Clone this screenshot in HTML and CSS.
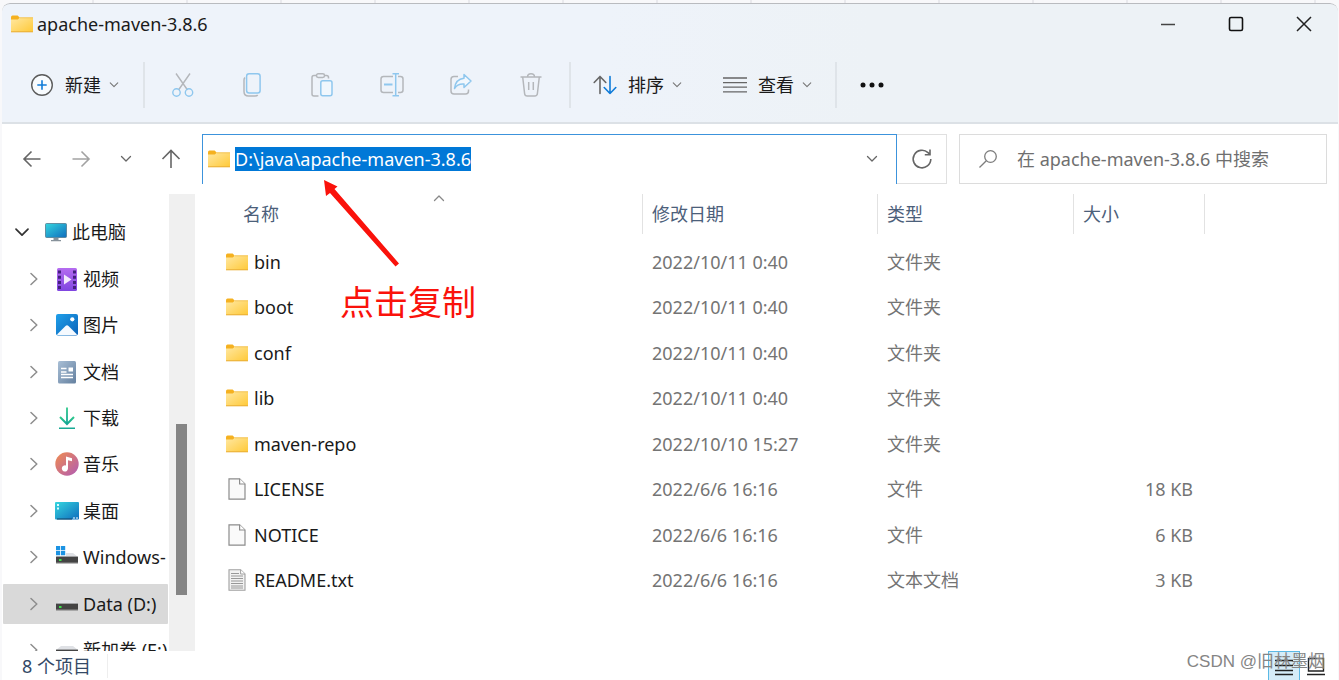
FILE: index.html
```html
<!DOCTYPE html>
<html lang="zh-CN">
<head>
<meta charset="utf-8">
<title>apache-maven-3.8.6</title>
<link rel="stylesheet" href="styles.css">
</head>
<body>
<svg class="defs" aria-hidden="true">
  <defs>
    <linearGradient id="g-folder" x1="0" y1="0" x2="1" y2="1"><stop offset="0" stop-color="#ffe8a3"/><stop offset="1" stop-color="#ffc937"/></linearGradient>
    <linearGradient id="g-screen" x1="0" y1="0" x2="1" y2="1"><stop offset="0" stop-color="#35d6df"/><stop offset="1" stop-color="#0f6cbd"/></linearGradient>
    <linearGradient id="g-video" x1="0" y1="0" x2="0" y2="1"><stop offset="0" stop-color="#b56cf0"/><stop offset="1" stop-color="#7f45e0"/></linearGradient>
    <linearGradient id="g-picture" x1="0" y1="0" x2="1" y2="1"><stop offset="0" stop-color="#1fa0ea"/><stop offset="1" stop-color="#0b62b8"/></linearGradient>
    <linearGradient id="g-doc" x1="0" y1="0" x2="1" y2="1"><stop offset="0" stop-color="#a9bfd6"/><stop offset="1" stop-color="#64809f"/></linearGradient>
    <linearGradient id="g-down" x1="0" y1="0" x2="0" y2="1"><stop offset="0" stop-color="#2fc98b"/><stop offset="1" stop-color="#12a595"/></linearGradient>
    <linearGradient id="g-music" x1="0" y1="0" x2="1" y2="1"><stop offset="0" stop-color="#f08c4f"/><stop offset="1" stop-color="#b05bb5"/></linearGradient>
  </defs>
  <symbol id="folder" viewBox="0 0 22 18">
    <path d="M0 2.2Q0 .5 1.5 .5H6.6L8.6 2.6V6H0Z" fill="#f5b120"/>
    <path d="M0 4.6H6.8L9 2.6H22V16.6Q22 17 21.5 17H.5Q0 17 0 16.6Z" fill="url(#g-folder)"/>
    <path d="M8.8 2.8H22" stroke="#f0bd48" stroke-width=".8"/>
    <path d="M0 16.8H22" stroke="#e9ad35" stroke-width="1"/>
  </symbol>
  <symbol id="file" viewBox="0 0 18 22">
    <path d="M1 .8H11.6L17 6V21.2H1Z" fill="#fafafa" stroke="#8c8c8c" stroke-width="1.2"/>
    <path d="M11.6 .8V6H17" fill="#fff" stroke="#8c8c8c" stroke-width="1.2"/>
  </symbol>
  <symbol id="textfile" viewBox="0 0 18 22">
    <path d="M1 .8H12.6L17 5V21.2H1Z" fill="#f2f2f2" stroke="#a0a0a0" stroke-width="1.1"/>
    <path d="M12.6 .8V5H17" fill="#fff" stroke="#a0a0a0"/>
    <path d="M3 4.5H11M3 7H15M3 9.5H15M3 12H15M3 14.500H15M3 17H15M3 19H15" stroke="#989898" stroke-width="1"/>
  </symbol>
  <symbol id="down" viewBox="0 0 12 8"><path d="M1.500 1.500L6 6L10.500 1.500" fill="none" stroke="currentColor" stroke-width="1.300" stroke-linecap="round" stroke-linejoin="round"/></symbol>
  <symbol id="right" viewBox="0 0 8 14"><path d="M1 1.500L6.800 7L1 12.500" fill="none" stroke="currentColor" stroke-width="1.500" stroke-linecap="round" stroke-linejoin="round"/></symbol>
  <symbol id="drive" viewBox="0 0 22 22">
    <path d="M5 8H17L22 12H0Z" fill="#dfe1e5"/>
    <path d="M0 11.600H22V18H0Z" fill="#444"/><path d="M0 17.200H22V18.500H0Z" fill="#777"/>
    <path d="M3 14H5.500V16H3Z" fill="#3be04a"/>
  </symbol>
</svg>

<div class="window">
  <header class="top">
    <div class="titlebar">
      <svg class="i-folder"><use href="#folder"/></svg>
      <h1 class="title">apache-maven-3.8.6</h1>
      <div class="controls">
        <button type="button" aria-label="最小化"><svg width="16" height="16"><path d="M1 8.500H15" stroke="#444" stroke-width="1.300"/></svg></button>
        <button type="button" aria-label="最大化"><svg width="16" height="16"><rect x="1.500" y="1.500" width="13" height="13" rx="1.500" fill="none" stroke="#111" stroke-width="1.600"/></svg></button>
        <button type="button" aria-label="关闭"><svg width="16" height="16"><path d="M1 1L15 15M15 1L1 15" stroke="#222" stroke-width="1.500"/></svg></button>
      </div>
    </div>
    <div class="toolbar">
      <button type="button" class="tool tool-new">
        <svg width="24" height="24"><circle cx="12" cy="12" r="10.300" fill="#f8fbfe" stroke="#5c5c5c" stroke-width="1.400"/><path d="M7.300 12H16.700M12 7.300V16.700" stroke="#0f7bd8" stroke-width="1.600"/></svg>
        <span>新建</span><svg class="chev small"><use href="#down"/></svg>
      </button>
      <div class="rule"></div>
      <div class="actions">
        <button type="button" aria-label="剪切"><svg width="24" height="26" fill="none" stroke-width="1.400"><path d="M5 1.500L16.500 18M19 1.500L7.500 18" stroke="#b4b7bb"/><circle cx="5.500" cy="20.500" r="3.700" stroke="#8fc7ee"/><circle cx="18" cy="20.500" r="3.700" stroke="#8fc7ee"/></svg></button>
        <button type="button" aria-label="复制"><svg width="22" height="26" fill="none" stroke-width="1.500"><path d="M4 5.500Q3 6.500 3 8V19.500Q3 24 7.500 24H14Q16 24 16.700 23" stroke="#b4b7bb"/><rect x="5.600" y="1.700" width="13.500" height="19.300" rx="2.500" stroke="#8fc7ee"/></svg></button>
        <button type="button" aria-label="粘贴"><svg width="24" height="26" fill="none" stroke-width="1.500"><path d="M6 3.500H4Q2 3.500 2 5.500V22Q2 24 4 24H8.500M14.500 3.500H16.500Q18.500 3.500 18.500 5.500V6.500" stroke="#b4b7bb"/><rect x="6.500" y="1.800" width="8" height="3.600" rx="1.700" stroke="#b4b7bb"/><rect x="10.800" y="8.800" width="11.200" height="15" rx="2" fill="#f1f7fd" stroke="#8fc7ee"/></svg></button>
        <button type="button" aria-label="重命名"><svg width="26" height="26" fill="none" stroke-width="1.500"><path d="M14 4.500H4.500Q2 4.500 2 7V18Q2 20.500 4.500 20.500H14M19 4.500H21.500Q24 4.500 24 7V18Q24 20.500 21.500 20.500H19" stroke="#b4b7bb"/><path d="M13.500 1.700H20M13.500 23.700H20M16.700 1.700V23.700" stroke="#8fc7ee"/><path d="M5 12.500H13.500" stroke="#8fc7ee" stroke-width="2.200"/></svg></button>
        <button type="button" aria-label="共享"><svg width="24" height="26" fill="none" stroke-width="1.500" stroke-linejoin="round"><path d="M9 4.500H5Q2 4.500 2 7.500V19Q2 22 5 22H16.500Q19.500 22 19.500 19V17.500" stroke="#b4b7bb"/><path d="M15 2.500L22 9L15 15.500V12Q8.500 11.500 5.500 16.500Q6.500 7 15 6.200Z" fill="#f1f7fd" stroke="#8fc7ee"/></svg></button>
        <button type="button" aria-label="删除"><svg width="24" height="26" fill="none" stroke="#b4b7bb" stroke-width="1.500"><path d="M1.500 5H22.500M8.500 5Q8.500 1.800 12 1.800T15.500 5M3.700 5L5.600 21.500Q5.900 24 8.200 24H15.800Q18.100 24 18.400 21.500L20.300 5M9.700 10V18M14.300 10V18"/></svg></button>
      </div>
      <div class="rule"></div>
      <button type="button" class="tool tool-sort">
        <svg width="24" height="20" fill="none" stroke-width="1.600" stroke-linecap="round" stroke-linejoin="round"><path d="M1.200 7.500L7 1.500L12.800 7.500M7 1.500V18.500" stroke="#666"/><path d="M11.200 12.500L17 18.500L22.800 12.500M17 18.500V1.500" stroke="#0f7bd8"/></svg>
        <span>排序</span><svg class="chev small"><use href="#down"/></svg>
      </button>
      <button type="button" class="tool tool-view">
        <svg width="24" height="18"><path d="M0 2H24M0 6.600H24M0 11.200H24M0 15.800H24" stroke="#666" stroke-width="1.300"/></svg>
        <span>查看</span><svg class="chev small"><use href="#down"/></svg>
      </button>
      <div class="rule"></div>
      <button type="button" class="more" aria-label="更多"><svg width="24" height="8" fill="#111"><circle cx="3" cy="4" r="2.500"/><circle cx="12" cy="4" r="2.500"/><circle cx="21" cy="4" r="2.500"/></svg></button>
    </div>
  </header>

  <div class="navbar">
    <nav class="arrows" aria-label="导航">
      <button type="button" aria-label="后退"><svg width="20" height="20" class="stroke"><path d="M9.500 2.500L2 10L9.500 17.500M2 10H18.500"/></svg></button>
      <button type="button" aria-label="前进" class="pale"><svg width="20" height="20" class="stroke"><path d="M10.500 2.500L18 10L10.500 17.500M18 10H1.500"/></svg></button>
      <button type="button" aria-label="最近位置"><svg class="chev"><use href="#down"/></svg></button>
      <button type="button" aria-label="上移"><svg width="20" height="20" class="stroke"><path d="M1.500 10L10 1.500L18.500 10M10 1.500V19"/></svg></button>
    </nav>
    <div class="address">
      <svg class="i-folder"><use href="#folder"/></svg>
      <input class="path" type="text" aria-label="地址" value="D:\java\apache-maven-3.8.6">
      <button type="button" class="drop" aria-label="历史"><svg class="chev"><use href="#down"/></svg></button>
    </div>
    <button type="button" class="refresh" aria-label="刷新"><svg width="22" height="22" class="stroke"><path d="M19.800 11A8.800 8.800 0 1 1 17 4.600L19 6.500M19 1.500V6.700H13.800"/></svg></button>
    <label class="search">
      <svg width="20" height="20" class="stroke thin"><circle cx="12.500" cy="7.500" r="5.800"/><path d="M8.300 11.700L1.500 18.500"/></svg>
      <input type="text" aria-label="搜索" placeholder="在 apache-maven-3.8.6 中搜索">
    </label>
  </div>

  <main class="body">
    <aside class="side">
      <ul class="tree">
        <li class="root"><svg class="open"><use href="#down"/></svg><svg width="22" height="22"><rect x=".500" y="2.500" width="21" height="14" rx="1" fill="url(#g-screen)" stroke="#527b91" stroke-width=".800"/><path d="M8.500 17H13.500V19H16V20.300H6V19H8.500Z" fill="#87929b"/></svg><span>此电脑</span></li>
        <li><svg class="closed"><use href="#right"/></svg><svg width="24" height="24"><rect x="2" y="1" width="20" height="23" rx="1.500" fill="url(#g-video)"/><path d="M4.500 3.500V23M19.500 3.500V23" stroke="#43207d" stroke-width="3" stroke-dasharray="3 2.200"/><path d="M9 7.500L16.500 12.500L9 17.500Z" fill="#f3e9fc"/></svg><span>视频</span></li>
        <li><svg class="closed"><use href="#right"/></svg><svg width="24" height="24"><rect x="1" y="1" width="22" height="21.500" rx="2" fill="url(#g-picture)"/><path d="M2 21.500L10.500 13Q12 11.700 13.500 13L22 21.500Q21.500 22 20 22H4Q2.500 22 2 21.500Z" fill="#f5faff"/><circle cx="17.300" cy="6.300" r="2.100" fill="#fff"/></svg><span>图片</span></li>
        <li><svg class="closed"><use href="#right"/></svg><svg width="24" height="24"><rect x="3" y="1" width="18" height="22.500" rx="1.500" fill="url(#g-doc)"/><path d="M6 8.500H11.500M6 12H11.500M6 14.500H18M6 17.500H18" stroke="#fff" stroke-width="1.300"/><path d="M13.500 7.500H18V11.500H13.500Z" fill="#fff"/></svg><span>文档</span></li>
        <li><svg class="closed"><use href="#right"/></svg><svg width="24" height="24" fill="none" stroke="url(#g-down)" stroke-width="2"><path d="M5 11L12 18L19 11"/><path d="M11.100 1.500H12.900V17H11.100Z" fill="url(#g-down)" stroke="none"/><path d="M4 21.500H20V23H4Z" fill="#16a994" stroke="none"/></svg><span>下载</span></li>
        <li><svg class="closed"><use href="#right"/></svg><svg width="24" height="24"><circle cx="12" cy="12" r="11.700" fill="url(#g-music)"/><path d="M11 4.500L17 6.200V9.300L13 8.200V16.300A3.100 3.100 0 1 1 11 13.500Z" fill="#fff"/></svg><span>音乐</span></li>
        <li><svg class="closed"><use href="#right"/></svg><svg width="24" height="24"><rect x="0" y="3" width="24" height="17.500" rx="1" fill="url(#g-screen)"/><path d="M2 5H4V7H2ZM2 8.500H4V10.500H2Z" fill="#d9fbff"/><path d="M2 20H17" stroke="#123e63"/><path d="M18 19H20M21 19H23" stroke="#fff"/></svg><span>桌面</span></li>
        <li><svg class="closed"><use href="#right"/></svg><svg width="24" height="24"><use href="#drive" x="1" y="0" width="22" height="22"/><path d="M0 0H11V11H0Z" fill="#fff"/><path d="M1 1H5.200V5.200H1ZM6 1H10.200V5.200H6ZM1 6H5.200V10.200H1ZM6 6H10.200V10.200H6Z" fill="#1c93e3"/></svg><span>Windows-</span></li>
        <li class="selected"><svg class="closed"><use href="#right"/></svg><svg width="24" height="24"><use href="#drive" x="1" y="0" width="22" height="22"/></svg><span>Data (D:)</span></li>
        <li><svg class="closed"><use href="#right"/></svg><svg width="24" height="24"><use href="#drive" x="1" y="0" width="22" height="22"/></svg><span>新加卷 (E:)</span></li>
      </ul>
      <div class="track"><div class="thumb"></div></div>
    </aside>

    <section class="files">
      <table>
        <colgroup><col class="c-name"><col class="c-date"><col class="c-type"><col class="c-size"><col></colgroup>
        <thead><tr>
          <th scope="col"><div class="head first">名称<svg class="sorted"><use href="#down"/></svg></div></th>
          <th scope="col"><div class="head">修改日期</div></th>
          <th scope="col"><div class="head">类型</div></th>
          <th scope="col"><div class="head">大小</div></th>
          <td></td>
        </tr></thead>
        <tbody>
          <tr><td><div class="name"><svg class="i-folder"><use href="#folder"/></svg>bin</div></td><td>2022/10/11 0:40</td><td>文件夹</td><td></td><td></td></tr>
          <tr><td><div class="name"><svg class="i-folder"><use href="#folder"/></svg>boot</div></td><td>2022/10/11 0:40</td><td>文件夹</td><td></td><td></td></tr>
          <tr><td><div class="name"><svg class="i-folder"><use href="#folder"/></svg>conf</div></td><td>2022/10/11 0:40</td><td>文件夹</td><td></td><td></td></tr>
          <tr><td><div class="name"><svg class="i-folder"><use href="#folder"/></svg>lib</div></td><td>2022/10/11 0:40</td><td>文件夹</td><td></td><td></td></tr>
          <tr><td><div class="name"><svg class="i-folder"><use href="#folder"/></svg>maven-repo</div></td><td>2022/10/10 15:27</td><td>文件夹</td><td></td><td></td></tr>
          <tr><td><div class="name"><svg class="i-file"><use href="#file"/></svg>LICENSE</div></td><td>2022/6/6 16:16</td><td>文件</td><td class="num">18 KB</td><td></td></tr>
          <tr><td><div class="name"><svg class="i-file"><use href="#file"/></svg>NOTICE</div></td><td>2022/6/6 16:16</td><td>文件</td><td class="num">6 KB</td><td></td></tr>
          <tr><td><div class="name"><svg class="i-file"><use href="#textfile"/></svg>README.txt</div></td><td>2022/6/6 16:16</td><td>文本文档</td><td class="num">3 KB</td><td></td></tr>
        </tbody>
      </table>
    </section>
  </main>

  <footer class="status">
    <span class="count">8 个项目</span>
    <div class="views">
      <button type="button" class="on" aria-label="详细信息"><svg width="18" height="20" stroke="#222" stroke-width="1.400"><path d="M0 4.500H18M0 9.500H18M0 14.500H18M0 18.500H18"/></svg></button>
      <button type="button" aria-label="大图标"><svg width="18" height="20" fill="none" stroke="#222" stroke-width="1.400"><path d="M1.500 2.500H16.500V15H1.500ZM0 18.500H18"/></svg></button>
    </div>
  </footer>

  <div class="note">
    <svg width="80" height="90" fill="#fa120b"><path d="M2 1L15.500 7.500L12.500 10L77 84.500L73.500 87.500L8 14L4 17Z"/></svg>
    <p>点击复制</p>
  </div>
  <div class="mark">CSDN @旧林墨烟</div>
</div>
</body>
</html>
```
FILE: styles.css
```css
* { box-sizing: border-box; }
html, body { height: 100%; }
body {
  margin: 0;
  padding: 3px 1px 0 2px;
  overflow: hidden;
  background: repeating-linear-gradient(90deg, #f8f8fa 0 92px, #e9e9ed 92px 94px);
  font: 18px/24px "Noto Sans", "Noto Sans CJK SC", sans-serif;
  color: #1a1a1a;
}
button { border: 0; padding: 0; background: none; font: inherit; color: inherit; }
input { border: 0; padding: 0; font: inherit; outline: 0; }
svg { display: block; flex: none; }
.defs { position: absolute; width: 0; height: 0; }
.i-folder { width: 22px; height: 18px; }
.i-file { width: 18px; height: 22px; margin: 0 2px; }
.chev { width: 12px; height: 8px; color: #666; }
.small { width: 10px; color: #777; }
.stroke { fill: none; stroke: #666; stroke-width: 1.6; }
.thin { stroke: #7d7d7d; stroke-width: 1.3; }

.window {
  position: relative;
  display: flex;
  flex-direction: column;
  height: 100%;
  background: #fff;
  border-radius: 8px 8px 0 0;
  overflow: hidden;
}
.top {
  background: linear-gradient(90deg, #eef3fa 45%, #edf2f6 65%);
  border-top: 1px solid #b9bbbf;
  border-bottom: 2px solid #dce1e6;
  border-radius: 8px 8px 0 0;
}
.titlebar { display: flex; align-items: center; gap: 4px; height: 40px; padding-left: 9px; }
.title { margin: 0; font-size: 18px; font-weight: 400; }
.controls { display: flex; margin-left: auto; }
.controls button { width: 68px; height: 40px; display: grid; place-items: center; }

.toolbar { display: flex; align-items: center; height: 78px; padding: 4px 0 0 28px; }
.tool { display: flex; align-items: center; gap: 11px; white-space: nowrap; }
.tool .chev { margin-left: -3px; }
.tool-new { width: 113px; }
.tool-sort { width: 130px; margin-left: 22px; }
.tool-view { width: 112px; }
.rule { width: 2px; height: 46px; background: #dfe4e9; }
.actions { display: grid; grid-template-columns: repeat(6, 1fr); width: 418px; margin: 0 3px; }
.actions button { display: grid; place-items: center; }
.more { margin-left: 23px; }

.navbar { display: flex; padding: 10px 11px 10px 0; height: 70px; flex: none; }
.arrows { display: flex; align-items: center; justify-content: space-between; width: 200px; padding: 0 21px 0 20px; }
.pale { opacity: .6; }
.address {
  flex: 1;
  min-width: 0;
  display: flex;
  align-items: center;
  gap: 5px;
  padding: 0 18px 2px 5px;
  border: 1px solid #3c93dc;
  border-bottom: 0;
}
.path { field-sizing: content; height: 24px; line-height: 24px; background: #0078d7; color: #fff; }
.drop { margin-left: auto; }
.refresh { width: 50px; display: grid; place-items: center; border: 1px solid #e0e0e0; border-left: 0; }
.search {
  width: 368px;
  display: flex;
  align-items: center;
  gap: 19px;
  margin-left: 12px;
  padding: 0 18px;
  border: 1px solid #dcdcdc;
}
.search input { flex: 1; min-width: 0; background: none; }
.search input::placeholder { color: #6f6f6f; opacity: 1; }

.body { display: flex; flex: 1; min-height: 0; }
.side { display: flex; width: 193px; flex: none; border-right: 1px solid #f0f0f0; overflow: hidden; }
.tree {
  display: flex;
  flex-direction: column;
  flex: 1;
  min-width: 0;
  height: 479px;
  margin: 0;
  padding: 15px 1px 0;
  list-style: none;
}
.tree li {
  flex: 1;
  display: flex;
  align-items: center;
  gap: 4px;
  padding-left: 27px;
  white-space: nowrap;
}
.tree .closed { width: 8px; height: 14px; margin-right: 13px; color: #8d8d8d; }
.tree .open { width: 16px; height: 11px; margin-right: 10px; color: #333; }
.tree .root { padding-left: 11px; gap: 5px; }
.tree .selected { height: 40px; flex: none; margin: 3px 0; background: #d9d9d9; border-radius: 1px; }
.track { width: 25px; padding: 230px 7px 56px; background: #f0f0f0; }
.thumb { height: 100%; background: #858585; }

.files { flex: 1; min-width: 0; padding-left: 4px; }
table { width: 100%; height: 409px; table-layout: fixed; border-collapse: collapse; color: #747474; }
.c-name { width: 444px; }
.c-date { width: 235px; }
.c-type { width: 196px; }
.c-size { width: 131px; }
th, td { padding: 0; text-align: left; font-weight: 400; }
tbody td { padding-left: 9px; }
tbody td:first-child { padding-left: 27px; }
tbody td.num { padding: 0 12px 0 0; text-align: right; }
thead tr { height: 45px; }
th { vertical-align: top; }
.head { display: flex; align-items: center; height: 40px; padding-left: 9px; border-right: 1px solid #e2e2e2; color: #4c607a; }
.first { position: relative; padding-left: 44px; }
.sorted { position: absolute; left: 234px; top: 0; width: 12px; height: 8px; color: #888; transform: rotate(180deg); }
.name { display: flex; align-items: center; gap: 6px; color: #1a1a1a; }

.status { display: flex; align-items: center; height: 29px; flex: none; padding: 0 6px 0 20px; }
.count { padding-right: 16px; border-right: 1px solid #eee; color: #344966; line-height: 24px; }
.views { display: flex; margin-left: auto; height: 29px; }
.views button { width: 32px; height: 29px; display: grid; place-items: center; }
.views .on { background: #d5ecf8; border: 1px solid #5bb9e5; border-bottom: 0; }

.note { position: absolute; left: 320px; top: 176px; color: #fa120b; }
.note p { margin: 11px 0 0 18px; font-size: 34px; line-height: 44px; }
.mark { position: absolute; right: 13px; bottom: 6px; color: #858585; font-family: "Liberation Sans", "Noto Sans CJK SC", sans-serif; font-size: 17px; }
```
